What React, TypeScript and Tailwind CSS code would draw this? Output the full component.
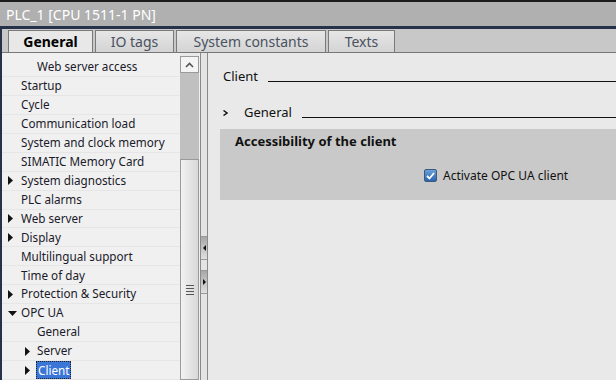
import React from 'react';

const font = "font-['Noto_Sans','DejaVu_Sans',sans-serif]";

type Row = { label: string; level: 1 | 2; arrow?: 'right' | 'down'; selected?: boolean };

const rows: Row[] = [
  { label: 'Web server access', level: 2 },
  { label: 'Startup', level: 1 },
  { label: 'Cycle', level: 1 },
  { label: 'Communication load', level: 1 },
  { label: 'System and clock memory', level: 1 },
  { label: 'SIMATIC Memory Card', level: 1 },
  { label: 'System diagnostics', level: 1, arrow: 'right' },
  { label: 'PLC alarms', level: 1 },
  { label: 'Web server', level: 1, arrow: 'right' },
  { label: 'Display', level: 1, arrow: 'right' },
  { label: 'Multilingual support', level: 1 },
  { label: 'Time of day', level: 1 },
  { label: 'Protection & Security', level: 1, arrow: 'right' },
  { label: 'OPC UA', level: 1, arrow: 'down' },
  { label: 'General', level: 2 },
  { label: 'Server', level: 2, arrow: 'right' },
  { label: 'Client', level: 2, arrow: 'right', selected: true },
];

function Arrow({ dir }: { dir: 'right' | 'down' }) {
  return dir === 'right' ? (
    <svg width="5" height="9" viewBox="0 0 5 9"><path d="M0 0 L5 4.5 L0 9 Z" fill="#111" /></svg>
  ) : (
    <svg width="9" height="5" viewBox="0 0 9 5"><path d="M0 0 L9 0 L4.5 5 Z" fill="#111" /></svg>
  );
}

function TreeRow({ row }: { row: Row }) {
  const arrowLeft = row.level === 1 ? 'w-[19px] pl-[6px]' : 'w-[35px] pl-[23px]';
  return (
    <div className="flex h-[19px] items-center border-b border-[#e6e6e6] text-[11.7px] text-[#1a1a2a]">
      <div className={`flex shrink-0 items-center ${arrowLeft}`}>{row.arrow && <Arrow dir={row.arrow} />}</div>
      {row.selected ? (
        <span className="-ml-[1px] border border-dotted border-[#222] bg-[#3a76d8] px-[1px] leading-[16px] text-white">{row.label}</span>
      ) : (
        <span>{row.label}</span>
      )}
    </div>
  );
}

function Tab({ label, active, w }: { label: string; active?: boolean; w: string }) {
  return (
    <div
      className={`flex h-[22px] items-center justify-center border border-b-0 border-[#7a7a7a] text-[14px] ${w} ${
        active ? 'bg-[#e8e8e8] font-bold text-black' : 'bg-gradient-to-b from-[#e6e6e6] to-[#d4d4d4] text-[#4a5260]'
      }`}
    >
      {label}
    </div>
  );
}

export default function App() {
  return (
    <div className={`flex h-[380px] w-[616px] flex-col overflow-hidden bg-[#e9e9e9] ${font}`}>
      <div className="h-[2px] bg-[#1c1c1c]" />
      <div className="flex h-[24px] items-center bg-[#b0b0b0] pl-[6px] text-[14px] text-white">PLC_1 [CPU 1511-1 PN]</div>
      <div className="h-[3px] bg-[#27324a]" />
      <div className="flex flex-1 overflow-hidden">
        <div className="w-[2px] bg-[#27324a]" />
        <div className="flex flex-1 flex-col">
          <div className="flex h-[24px] items-end gap-[2px] border-b border-[#777] bg-[#c8c8c8] pl-[6px]">
            <Tab label="General" active w="w-[85px]" />
            <Tab label="IO tags" w="w-[79px]" />
            <Tab label="System constants" w="w-[150px]" />
            <Tab label="Texts" w="w-[67px]" />
          </div>
          <div className="flex flex-1 overflow-hidden">
            <div className="flex w-[178px] flex-col bg-[#f0f0f0] pt-[5px]">
              {rows.map((r) => (
                <TreeRow key={r.label + r.level} row={r} />
              ))}
            </div>
            <div className="flex w-[19px] flex-col pt-[3px]">
              <div className="flex h-[17px] items-center justify-center border border-[#9a9a9a] bg-[#f4f4f4]">
                <svg width="9" height="6" viewBox="0 0 9 6"><path d="M1 5 L4.5 1.5 L8 5" stroke="#555" strokeWidth="1.6" fill="none" /></svg>
              </div>
              <div className="h-[86px] bg-[#c0c0c0]" />
              <div className="flex flex-1 items-center justify-center border border-[#9a9a9a] bg-gradient-to-r from-[#f2f2f2] to-[#d8d8d8]">
                <div className="mt-[40px] flex flex-col gap-[2px]">
                  <div className="h-[1px] w-[8px] bg-[#555]" />
                  <div className="h-[1px] w-[8px] bg-[#555]" />
                  <div className="h-[1px] w-[8px] bg-[#555]" />
                  <div className="h-[1px] w-[8px] bg-[#555]" />
                </div>
              </div>
            </div>
            <div className="w-[1px] bg-[#f0f0f0]" />
            <div className="flex w-[8px] flex-col border-x border-[#8a8a8a] bg-[#e4e4e4] pt-[183px]">
              <div className="flex h-[24px] items-center justify-center border-y border-[#999] bg-gradient-to-b from-[#a8a8a8] to-[#e0e0e0]">
                <svg width="3" height="6" viewBox="0 0 3 6"><path d="M3 0 L0 3 L3 6 Z" fill="#111" /></svg>
              </div>
              <div className="h-[10px]" />
              <div className="flex h-[24px] items-center justify-center border-y border-[#999] bg-gradient-to-b from-[#a8a8a8] to-[#e0e0e0]">
                <svg width="3" height="6" viewBox="0 0 3 6"><path d="M0 0 L3 3 L0 6 Z" fill="#111" /></svg>
              </div>
            </div>
            <div className="flex flex-1 flex-col bg-[#e9e9e9] pl-[12px] pt-[14px]">
              <div className="flex h-[19px] items-center text-[13px] text-[#111]">
                <span className="pl-[3px]">Client</span>
                <div className="ml-[10px] mt-[10px] h-[1px] flex-1 bg-[#111]" />
              </div>
              <div className="mt-[17px] flex h-[19px] items-center text-[13px] text-[#111]">
                <svg className="ml-[3px] mr-[16px]" width="5" height="6" viewBox="0 0 5 6"><path d="M0.5 0.5 L4 3 L0.5 5.5" stroke="#111" strokeWidth="1.4" fill="none" /></svg>
                <span>General</span>
                <div className="ml-[10px] mt-[10px] h-[1px] flex-1 bg-[#111]" />
              </div>
              <div className="mt-[7px] flex h-[71px] flex-col bg-[#c9c9c9] pl-[15px] pt-[3px]">
                <div className="text-[13px] font-bold text-[#111]">Accessibility of the client</div>
                <div className="mt-[15px] flex items-center pl-[189px] text-[12px] text-[#111]">
                  <div className="flex h-[13px] w-[13px] items-center justify-center rounded-[2px] border border-[#3a5a80] bg-gradient-to-b from-[#6aa0d8] to-[#2a64b0]">
                    <svg width="9" height="8" viewBox="0 0 9 8"><path d="M1 4 L3.5 6.5 L8 1" stroke="#fff" strokeWidth="1.8" fill="none" /></svg>
                  </div>
                  <span className="ml-[6px]">Activate OPC UA client</span>
                </div>
              </div>
            </div>
          </div>
        </div>
      </div>
    </div>
  );
}
